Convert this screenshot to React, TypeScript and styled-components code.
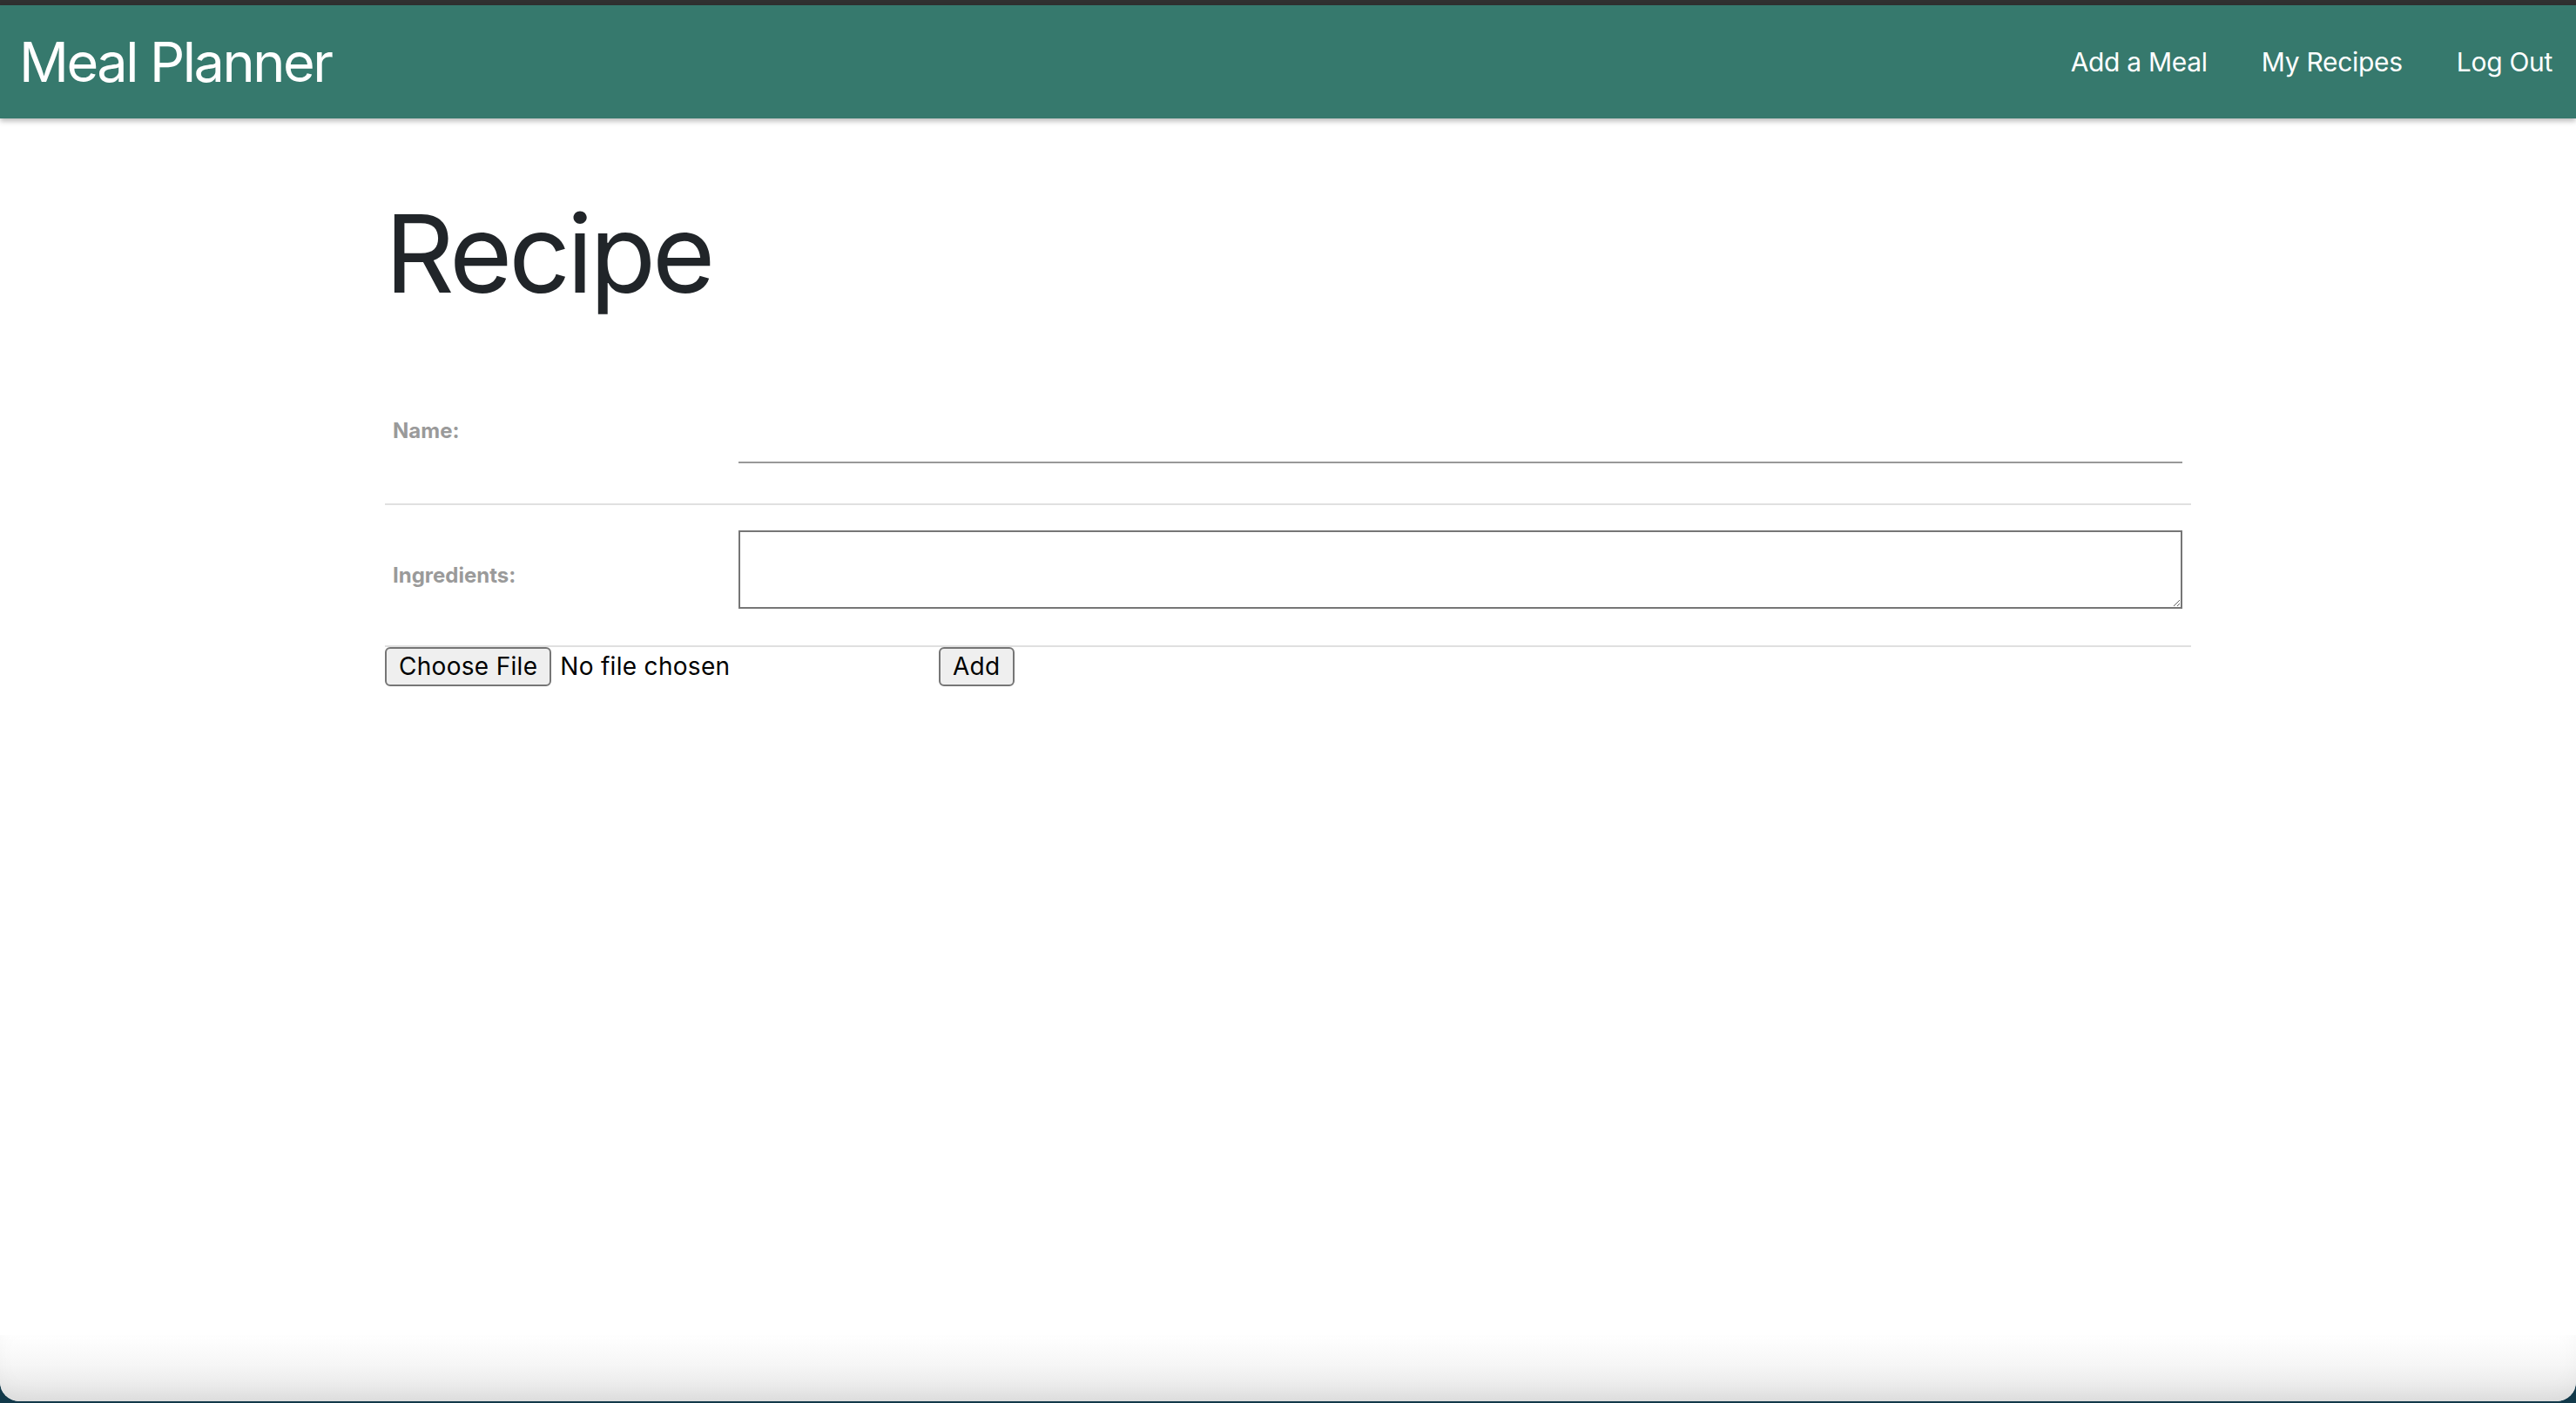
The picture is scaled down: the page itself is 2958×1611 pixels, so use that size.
import React, { useState } from 'react';
import styled, { createGlobalStyle } from 'styled-components';

const GlobalStyle = createGlobalStyle`
  html, body {
    margin: 0;
    padding: 0;
    height: 100%;
  }
  body {
    background: #12394a;
    font-family: Inter, "Noto Sans", sans-serif;
  }
  #root {
    height: 100%;
  }
  * {
    box-sizing: border-box;
  }
`;

const Frame = styled.div`
  height: calc(100vh - 2px);
  display: flex;
  flex-direction: column;
  background: #fff;
  border-radius: 0 0 22px 22px;
  overflow: hidden;
`;

const TopEdge = styled.div`
  height: 6px;
  flex-shrink: 0;
  background: #303030;
`;

const Navbar = styled.nav`
  position: relative;
  z-index: 1;
  height: 130px;
  flex-shrink: 0;
  display: flex;
  align-items: center;
  justify-content: space-between;
  padding: 0 27px 0 22px;
  background: #36796d;
  box-shadow: 0 3px 6px rgba(0, 0, 0, 0.28);
`;

const Brand = styled.a`
  color: #fff;
  font-size: 63px;
  line-height: 1;
  letter-spacing: -2.5px;
  text-decoration: none;
`;

const NavLinks = styled.div`
  display: flex;
  align-items: center;
  gap: 62px;
`;

const NavLink = styled.a`
  color: #fff;
  font-size: 30px;
  letter-spacing: -0.3px;
  text-decoration: none;
`;

const Main = styled.main`
  flex: 1;
`;

const Container = styled.div`
  width: 2074px;
  margin: 0 auto;
`;

const Heading = styled.h1`
  margin: 81px 0 46px;
  font-size: 124px;
  font-weight: 400;
  line-height: 1.2;
  letter-spacing: -4px;
  color: #212529;
`;

const Row = styled.div<{ $pad: string }>`
  display: grid;
  grid-template-columns: 406px 1fr;
  align-items: center;
  padding: ${p => p.$pad};
  border-bottom: 2px solid #e0e0e0;
`;

const Label = styled.label`
  padding-left: 9px;
  font-size: 24px;
  font-weight: 700;
  color: #9a9a9a;
`;

const NameInput = styled.input`
  display: block;
  width: 100%;
  height: 50px;
  margin: 46px 0 22px;
  border: none;
  border-bottom: 2px solid #999;
  outline: none;
  background: transparent;
  font-family: inherit;
  font-size: 28px;
`;

const TextArea = styled.textarea`
  display: block;
  width: 100%;
  height: 90px;
  margin-bottom: 13px;
  border: 2px solid #767676;
  border-radius: 0;
  font-family: inherit;
  font-size: 28px;
`;

const Actions = styled.div`
  display: flex;
  align-items: center;
  gap: 8px;
`;

const FilePicker = styled.label`
  display: inline-flex;
  align-items: center;
  gap: 10px;
  width: 628px;
  font-size: 28px;
  color: #000;
  cursor: pointer;

  input {
    display: none;
  }
`;

const Button = styled.span`
  display: inline-flex;
  align-items: center;
  height: 45px;
  padding: 0 14px;
  border: 2px solid #767676;
  border-radius: 6px;
  background: #efefef;
  font-family: inherit;
  font-size: 28px;
  letter-spacing: 0.3px;
  color: #000;
`;

const SubmitButton = styled(Button).attrs({ as: 'button' })`
  cursor: pointer;
`;

const FileName = styled.span`
  letter-spacing: 0.3px;
`;

const Fade = styled.div`
  height: 76px;
  flex-shrink: 0;
  background: linear-gradient(to bottom, #ffffff 0%, #f6f6f6 45%, #e3e3e3 100%);
  border-radius: 0 0 22px 22px;
  box-shadow: inset 0 -10px 30px -10px rgba(0, 0, 0, 0.06);
`;

const App: React.FC = () => {
  const [fileName, setFileName] = useState('No file chosen');

  return (
    <>
      <GlobalStyle />
      <Frame>
        <TopEdge />
        <Navbar>
          <Brand href="#">Meal Planner</Brand>
          <NavLinks>
            <NavLink href="#">Add a Meal</NavLink>
            <NavLink href="#">My Recipes</NavLink>
            <NavLink href="#">Log Out</NavLink>
          </NavLinks>
        </Navbar>
        <Main>
          <Container>
            <Heading>Recipe</Heading>
            <form onSubmit={e => e.preventDefault()}>
              <Row $pad="24px 10px 24px 0">
                <Label htmlFor="name">Name:</Label>
                <NameInput id="name" type="text" />
              </Row>
              <Row $pad="29px 10px 29px 0">
                <Label htmlFor="ingredients">Ingredients:</Label>
                <TextArea id="ingredients" />
              </Row>
              <Actions>
                <FilePicker>
                  <input
                    type="file"
                    onChange={e => setFileName(e.target.files?.[0]?.name ?? 'No file chosen')}
                  />
                  <Button>Choose File</Button>
                  <FileName>{fileName}</FileName>
                </FilePicker>
                <SubmitButton type="submit">Add</SubmitButton>
              </Actions>
            </form>
          </Container>
        </Main>
        <Fade />
      </Frame>
    </>
  );
};

export default App;
